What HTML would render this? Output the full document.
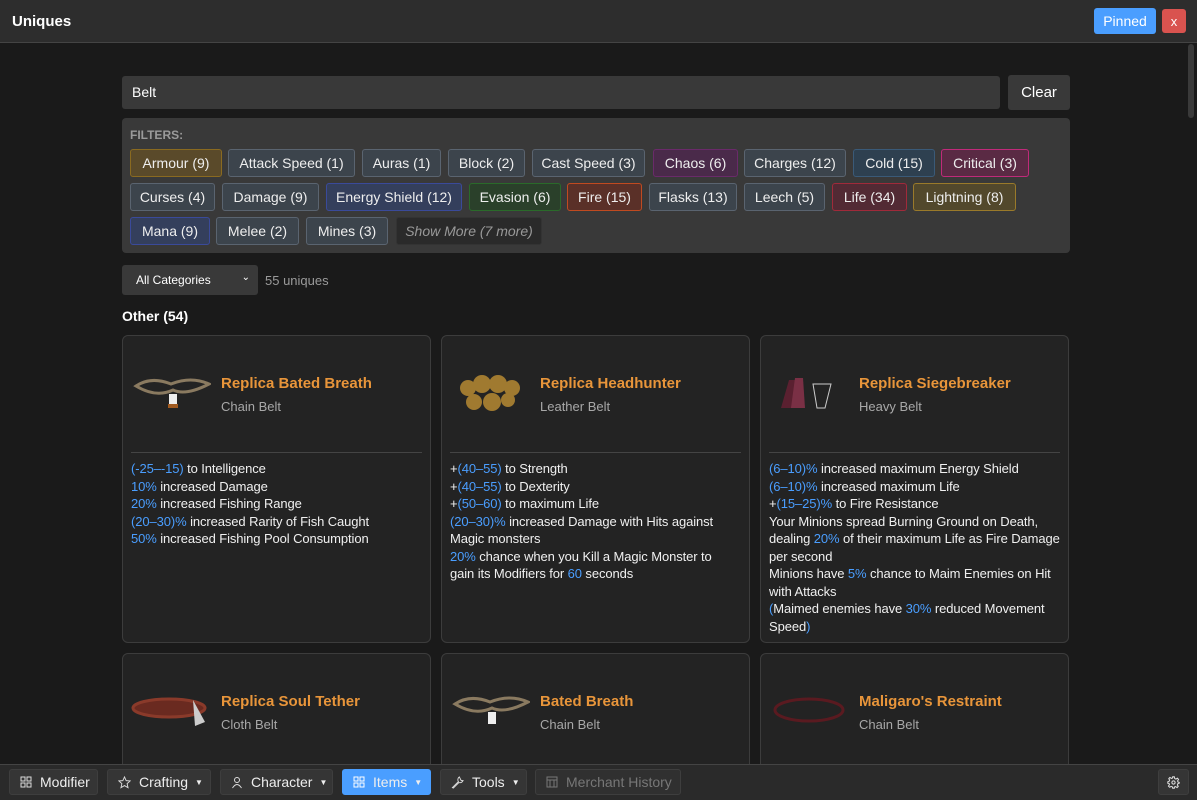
<!DOCTYPE html>
<html><head><meta charset="utf-8"><style>
*{box-sizing:border-box;margin:0;padding:0}
body{width:1197px;height:800px;background:#1a1a1a;font-family:"Liberation Sans",sans-serif;color:#eee;position:relative;overflow:hidden}
.abs{position:absolute}
.hdr{left:0;top:0;width:1197px;height:43px;background:#2d2d2d;border-bottom:1px solid #444}
.tag{position:absolute;height:28px;border:1px solid #5a6470;background:#3c444c;border-radius:3px;font-size:14px;color:#eee;display:flex;align-items:center;justify-content:center;white-space:nowrap}
.card{position:absolute;width:309px;background:#232323;border:1px solid #3c3c3c;border-radius:6px}
.card .ic{position:absolute;left:8px;top:32px;width:80px;height:55px}
.card .nm{position:absolute;left:98px;top:39px;font-size:15px;font-weight:bold;color:#e8953a}
.card .bt{position:absolute;left:98px;top:63px;font-size:13px;color:#a8a8a8}
.card .hr{position:absolute;left:8px;right:8px;top:116px;border-top:1px solid #444}
.card .st{position:absolute;left:8px;right:0;top:124px;font-size:13px;line-height:17.5px;color:#f0f0f0;white-space:nowrap;letter-spacing:-0.1px}
.v{color:#4a9eff}
.bb{position:absolute;top:769px;height:26px;background:#353535;border:1px solid #3e3e3e;border-radius:3px;font-size:14px;color:#eee;display:flex;align-items:center;padding-left:10px;white-space:nowrap}
.bb svg{margin-right:8px}
.ar{font-size:8px;margin-left:7px}
</style></head><body>
<div class="abs hdr"></div>
<div class="abs" style="left:12px;top:13px;font-size:15px;font-weight:bold;color:#fff">Uniques</div>
<div class="abs" style="left:1094px;top:8px;width:62px;height:26px;background:#4a9eff;border-radius:3px;color:#fff;font-size:14px;display:flex;align-items:center;justify-content:center">Pinned</div>
<div class="abs" style="left:1162px;top:9px;width:24px;height:24px;background:#d9534f;border-radius:3px;color:#fff;font-size:13px;display:flex;align-items:center;justify-content:center">x</div>
<div class="abs" style="left:1188px;top:44px;width:6px;height:74px;background:#3a3a3a;border-radius:3px"></div>

<div class="abs" style="left:122px;top:76px;width:878px;height:33px;background:#393939;border-radius:3px;font-size:14px;color:#fff;padding:8px 10px">Belt</div>
<div class="abs" style="left:1008px;top:75px;width:62px;height:35px;background:#393939;border-radius:3px;font-size:15px;color:#fff;display:flex;align-items:center;justify-content:center">Clear</div>

<div class="abs" style="left:122px;top:118px;width:948px;height:135px;background:#393939;border-radius:4px"></div>
<div class="abs" style="left:130px;top:128px;font-size:12px;font-weight:bold;color:#9a9a9a">FILTERS:</div>

<div class="tag" style="left:130px;top:149px;width:92px;background:#5a4a2a;border-color:#8a6a20">Armour (9)</div>
<div class="tag" style="left:228px;top:149px;width:127px">Attack Speed (1)</div>
<div class="tag" style="left:362px;top:149px;width:79px">Auras (1)</div>
<div class="tag" style="left:448px;top:149px;width:77px">Block (2)</div>
<div class="tag" style="left:532px;top:149px;width:113px">Cast Speed (3)</div>
<div class="tag" style="left:653px;top:149px;width:85px;background:#4a2a4a;border-color:#6a2a6a">Chaos (6)</div>
<div class="tag" style="left:744px;top:149px;width:102px">Charges (12)</div>
<div class="tag" style="left:853px;top:149px;width:82px;background:#2e4050;border-color:#3a5a78">Cold (15)</div>
<div class="tag" style="left:941px;top:149px;width:88px;background:#5a2a44;border-color:#c02a7a">Critical (3)</div>

<div class="tag" style="left:130px;top:183px;width:85px">Curses (4)</div>
<div class="tag" style="left:222px;top:183px;width:97px">Damage (9)</div>
<div class="tag" style="left:326px;top:183px;width:136px;background:#343f5c;border-color:#3a4a9a">Energy Shield (12)</div>
<div class="tag" style="left:469px;top:183px;width:92px;background:#2a402a;border-color:#2a6a2a">Evasion (6)</div>
<div class="tag" style="left:567px;top:183px;width:75px;background:#5a3028;border-color:#c04a20">Fire (15)</div>
<div class="tag" style="left:649px;top:183px;width:88px">Flasks (13)</div>
<div class="tag" style="left:744px;top:183px;width:81px">Leech (5)</div>
<div class="tag" style="left:832px;top:183px;width:75px;background:#522a34;border-color:#a02a3a">Life (34)</div>
<div class="tag" style="left:913px;top:183px;width:103px;background:#52482c;border-color:#9a7a2a">Lightning (8)</div>

<div class="tag" style="left:130px;top:217px;width:80px;background:#343f5c;border-color:#3a4a9a">Mana (9)</div>
<div class="tag" style="left:216px;top:217px;width:83px">Melee (2)</div>
<div class="tag" style="left:306px;top:217px;width:82px">Mines (3)</div>
<div class="tag" style="left:396px;top:217px;width:146px;background:#2a2a2a;border-color:#333;color:#999;font-style:italic">Show More (7 more)</div>

<div class="abs" style="left:122px;top:265px;width:136px;height:30px;background:#393939;border-radius:3px;font-size:12px;color:#fff;padding:8px 14px">All Categories<span style="position:absolute;right:8px;top:7px;font-size:10px">&#8964;</span></div>
<div class="abs" style="left:265px;top:273px;font-size:13px;color:#9a9a9a">55 uniques</div>
<div class="abs" style="left:122px;top:308px;font-size:14px;font-weight:bold;color:#fff">Other (54)</div>

<div class="card" style="left:122px;top:335px;height:308px">
<svg class="ic" viewBox="0 0 80 55"><path d="M5 18 Q20 8 40 16 Q60 8 78 16 Q55 28 42 22 Q25 30 5 18Z" fill="none" stroke="#8a7a60" stroke-width="3"/><rect x="38" y="26" width="8" height="12" fill="#eee"/><rect x="37" y="36" width="10" height="4" fill="#a05a20"/></svg>
<div class="nm">Replica Bated Breath</div><div class="bt">Chain Belt</div><div class="hr"></div>
<div class="st"><span class="v">(-25–-15)</span> to Intelligence<br><span class="v">10%</span> increased Damage<br><span class="v">20%</span> increased Fishing Range<br><span class="v">(20–30)%</span> increased Rarity of Fish Caught<br><span class="v">50%</span> increased Fishing Pool Consumption</div></div>

<div class="card" style="left:441px;top:335px;height:308px">
<svg class="ic" viewBox="0 0 80 55"><g fill="#a07a30"><circle cx="18" cy="20" r="8"/><circle cx="32" cy="16" r="9"/><circle cx="48" cy="16" r="9"/><circle cx="62" cy="20" r="8"/><circle cx="24" cy="34" r="8"/><circle cx="42" cy="34" r="9"/><circle cx="58" cy="32" r="7"/></g></svg>
<div class="nm">Replica Headhunter</div><div class="bt">Leather Belt</div><div class="hr"></div>
<div class="st">+<span class="v">(40–55)</span> to Strength<br>+<span class="v">(40–55)</span> to Dexterity<br>+<span class="v">(50–60)</span> to maximum Life<br><span class="v">(20–30)%</span> increased Damage with Hits against<br>Magic monsters<br><span class="v">20%</span> chance when you Kill a Magic Monster to<br>gain its Modifiers for <span class="v">60</span> seconds</div></div>

<div class="card" style="left:760px;top:335px;height:308px">
<svg class="ic" viewBox="0 0 80 55"><path d="M12 40 L20 12 L32 12 L34 40Z" fill="#5a2030"/><path d="M22 40 L26 10 L34 10 L36 40Z" fill="#7a3045"/><path d="M44 16 L62 16 L56 40 L48 40Z" fill="none" stroke="#ccc" stroke-width="1"/></svg>
<div class="nm">Replica Siegebreaker</div><div class="bt">Heavy Belt</div><div class="hr"></div>
<div class="st"><span class="v">(6–10)%</span> increased maximum Energy Shield<br><span class="v">(6–10)%</span> increased maximum Life<br>+<span class="v">(15–25)%</span> to Fire Resistance<br>Your Minions spread Burning Ground on Death,<br>dealing <span class="v">20%</span> of their maximum Life as Fire Damage<br>per second<br>Minions have <span class="v">5%</span> chance to Maim Enemies on Hit<br>with Attacks<br><span class="v">(</span>Maimed enemies have <span class="v">30%</span> reduced Movement<br>Speed<span class="v">)</span></div></div>

<div class="card" style="left:122px;top:653px;height:140px">
<svg class="ic" viewBox="0 0 80 55"><ellipse cx="38" cy="22" rx="36" ry="9" fill="#6a2a20" stroke="#8a3a2a" stroke-width="3"/><path d="M62 14 L74 36 L64 40Z" fill="#ccc"/></svg>
<div class="nm">Replica Soul Tether</div><div class="bt">Cloth Belt</div></div>
<div class="card" style="left:441px;top:653px;height:140px">
<svg class="ic" viewBox="0 0 80 55"><path d="M5 18 Q20 8 40 16 Q60 8 78 16 Q55 28 42 22 Q25 30 5 18Z" fill="none" stroke="#8a7a60" stroke-width="3"/><rect x="38" y="26" width="8" height="12" fill="#eee"/></svg>
<div class="nm">Bated Breath</div><div class="bt">Chain Belt</div></div>
<div class="card" style="left:760px;top:653px;height:140px">
<svg class="ic" viewBox="0 0 80 55"><ellipse cx="40" cy="24" rx="34" ry="11" fill="none" stroke="#5a1a20" stroke-width="3"/></svg>
<div class="nm">Maligaro's Restraint</div><div class="bt">Chain Belt</div></div>

<div class="abs" style="left:0;top:764px;width:1197px;height:36px;background:#2a2a2a;border-top:1px solid #444"></div>
<div class="bb" style="left:9px;width:89px"><svg width="12" height="12" viewBox="0 0 12 12" fill="none" stroke="#ddd"><rect x="1" y="1" width="4" height="4"/><rect x="7" y="1" width="4" height="4"/><rect x="1" y="7" width="4" height="4"/><rect x="7" y="7" width="4" height="4"/></svg>Modifier</div>
<div class="bb" style="left:107px;width:104px"><svg width="13" height="13" viewBox="0 0 14 14" fill="none" stroke="#ddd"><path d="M7 1 L8.8 5 L13 5.3 L9.8 8.2 L10.8 12.6 L7 10.3 L3.2 12.6 L4.2 8.2 L1 5.3 L5.2 5Z"/></svg>Crafting<span class="ar">▼</span></div>
<div class="bb" style="left:220px;width:113px"><svg width="12" height="13" viewBox="0 0 12 13" fill="none" stroke="#ddd"><circle cx="6" cy="4" r="2.5"/><path d="M1.5 12 Q6 5 10.5 12"/></svg>Character<span class="ar">▼</span></div>
<div class="bb" style="left:342px;width:89px;background:#4a9eff;border-color:#4a9eff"><svg width="12" height="12" viewBox="0 0 12 12" fill="none" stroke="#fff"><rect x="1" y="1" width="4" height="4"/><rect x="7" y="1" width="4" height="4"/><rect x="1" y="7" width="4" height="4"/><rect x="7" y="7" width="4" height="4"/></svg>Items<span class="ar">▼</span></div>
<div class="bb" style="left:440px;width:87px"><svg width="13" height="13" viewBox="0 0 14 14" fill="none" stroke="#ddd"><path d="M9 1 A3.5 3.5 0 0 0 8 6 L1.5 12.5 L2.5 13 L8.5 7 A3.5 3.5 0 0 0 13 5 L11 5 L10 3Z"/></svg>Tools<span class="ar">▼</span></div>
<div class="bb" style="left:535px;width:146px;background:#303030;color:#777"><svg width="12" height="12" viewBox="0 0 12 12" fill="none" stroke="#777"><rect x="1" y="1" width="10" height="10"/><path d="M1 4 H11 M4 4 V11 M8 4 V11"/></svg>Merchant History</div>
<div class="bb" style="left:1158px;width:31px;padding-left:8px"><svg width="15" height="15" viewBox="0 0 16 16" fill="none" stroke="#ddd" stroke-width="1.3"><circle cx="8" cy="8" r="2"/><path d="M7 1 H9 L9.4 3 L11 3.8 L12.8 2.7 L14.2 4.2 L13 6 L13.6 7.5 L15 7.9 V8.9 L13.4 9.4 L12.8 11 L13.8 12.8 L12.4 14.2 L10.6 13 L9.2 13.6 L9 15 H7 L6.6 13.4 L5 12.8 L3.2 13.8 L1.8 12.4 L3 10.6 L2.4 9.1 L1 8.9 V7.1 L2.6 6.6 L3.2 5 L2.2 3.2 L3.6 1.8 L5.4 3 L6.8 2.4Z"/></svg></div>
</body></html>
